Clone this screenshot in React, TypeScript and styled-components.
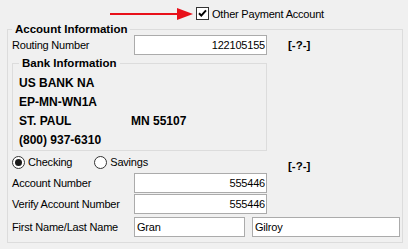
import React from "react";
import styled, { createGlobalStyle } from "styled-components";

const GlobalStyle = createGlobalStyle`
  html, body {
    margin: 0;
    padding: 0;
    background: #f0f0f0;
  }
  body {
    font-family: "Liberation Sans", Arial, sans-serif;
    font-size: 11px;
    color: #000;
  }
`;

const Page = styled.div`
  width: 408px;
  height: 249px;
  overflow: hidden;
  background: #f0f0f0;
`;

const TopBar = styled.div`
  height: 22px;
  box-sizing: border-box;
  padding: 5px 0 0 110px;
  display: flex;
  align-items: center;
  align-self: flex-start;
`;

const TopRow = styled.div`
  height: 14px;
  display: flex;
  align-items: center;
`;

const CheckBox = styled.span`
  width: 13px;
  height: 13px;
  box-sizing: border-box;
  border: 1px solid #333;
  background: #fff;
  display: flex;
  align-items: center;
  justify-content: center;
  margin-left: 3px;
`;

const Text = styled.span`
  letter-spacing: -0.2px;
  white-space: nowrap;
`;

const CheckText = styled(Text)`
  margin-left: 3px;
`;

const Group = styled.fieldset<{ $w: number; $h: number; $pl: number }>`
  margin: 0;
  box-sizing: border-box;
  width: ${(p) => p.$w}px;
  height: ${(p) => p.$h}px;
  border: 1px solid #dcdcdc;
  padding: 0 0 0 ${(p) => p.$pl}px;
  min-width: 0;
`;

const OuterGroup = styled(Group)`
  margin-left: 7px;
`;

const BankGroup = styled(Group)`
  margin-top: 1px;
  padding-top: 4px;
`;

const Legend = styled.legend`
  padding: 0 3px;
  font-weight: bold;
  font-size: 11.5px;
  line-height: 14px;
`;

const Row = styled.div<{ $cols: string; $mt: number }>`
  display: grid;
  grid-template-columns: ${(p) => p.$cols};
  align-items: center;
  height: 20px;
  margin-top: ${(p) => p.$mt}px;
`;

const Field = styled.input<{ $align?: string }>`
  height: 20px;
  width: 100%;
  box-sizing: border-box;
  border: 1px solid #ababab;
  background: #fff;
  margin: 0;
  padding: 0 1px 0 2px;
  font-family: "Liberation Sans", Arial, sans-serif;
  font-size: 11px;
  letter-spacing: -0.2px;
  color: #000;
  text-align: ${(p) => p.$align || "left"};
  outline: none;
`;

const Help = styled.span<{ $pt?: number }>`
  font-weight: bold;
  font-size: 11.5px;
  padding-left: 21px;
  padding-top: ${(p) => p.$pt || 0}px;
`;

const BankLines = styled.div`
  display: grid;
  grid-template-columns: 112px auto;
  font-weight: bold;
  font-size: 12px;
  line-height: 19px;
  white-space: nowrap;
`;

const Wide = styled.div`
  grid-column: 1 / span 2;
`;

const RadioGroup = styled.div`
  display: flex;
  align-items: center;
  gap: 22px;
`;

const RadioOption = styled.label`
  display: flex;
  align-items: center;
  gap: 3px;
`;

const RadioCircle = styled.span<{ $on?: boolean }>`
  width: 13px;
  height: 13px;
  box-sizing: border-box;
  border: 1px solid #333;
  border-radius: 50%;
  background: #fff;
  display: flex;
  align-items: center;
  justify-content: center;
  &::after {
    content: "";
    width: 7px;
    height: 7px;
    border-radius: 50%;
    background: ${(p) => (p.$on ? "#1a1a1a" : "transparent")};
  }
`;

const NameFields = styled.div`
  display: grid;
  grid-template-columns: 111px 148px;
  gap: 7px;
`;

const FORM_COLS = "122px 133px auto";

function Arrow() {
  return (
    <svg width="83" height="14" viewBox="0 0 83 14">
      <rect x="0" y="6" width="70" height="2" fill="#e8101a" />
      <polygon points="67,1 83,7 67,13" fill="#e8101a" />
    </svg>
  );
}

function Tick() {
  return (
    <svg width="11" height="11" viewBox="0 0 11 11">
      <path d="M2 5.2 L4.3 7.6 L9 2.4" fill="none" stroke="#000" strokeWidth="2" />
    </svg>
  );
}

export default function App() {
  return (
    <Page>
      <GlobalStyle />
      <TopBar>
        <TopRow>
          <Arrow />
          <CheckBox>
            <Tick />
          </CheckBox>
          <CheckText>Other Payment Account</CheckText>
        </TopRow>
      </TopBar>
      <OuterGroup $w={396} $h={221} $pl={4}>
        <Legend>Account Information</Legend>
        <Row $cols={FORM_COLS} $mt={-1}>
          <Text>Routing Number</Text>
          <Field readOnly value="122105155" $align="right" />
          <Help>[-?-]</Help>
        </Row>
        <BankGroup $w={255} $h={95} $pl={6}>
          <Legend>Bank Information</Legend>
          <BankLines>
            <Wide>US BANK NA</Wide>
            <Wide>EP-MN-WN1A</Wide>
            <div>ST. PAUL</div>
            <div>MN 55107</div>
            <Wide>(800) 937-6310</Wide>
          </BankLines>
        </BankGroup>
        <Row $cols="255px auto" $mt={1}>
          <RadioGroup>
            <RadioOption>
              <RadioCircle $on />
              <Text>Checking</Text>
            </RadioOption>
            <RadioOption>
              <RadioCircle />
              <Text>Savings</Text>
            </RadioOption>
          </RadioGroup>
          <Help $pt={7}>[-?-]</Help>
        </Row>
        <Row $cols={FORM_COLS} $mt={1}>
          <Text>Account Number</Text>
          <Field readOnly value="555446" $align="right" />
        </Row>
        <Row $cols={FORM_COLS} $mt={1}>
          <Text>Verify Account Number</Text>
          <Field readOnly value="555446" $align="right" />
        </Row>
        <Row $cols="122px auto" $mt={3}>
          <Text>First Name/Last Name</Text>
          <NameFields>
            <Field readOnly value="Gran" />
            <Field readOnly value="Gilroy" />
          </NameFields>
        </Row>
      </OuterGroup>
    </Page>
  );
}
